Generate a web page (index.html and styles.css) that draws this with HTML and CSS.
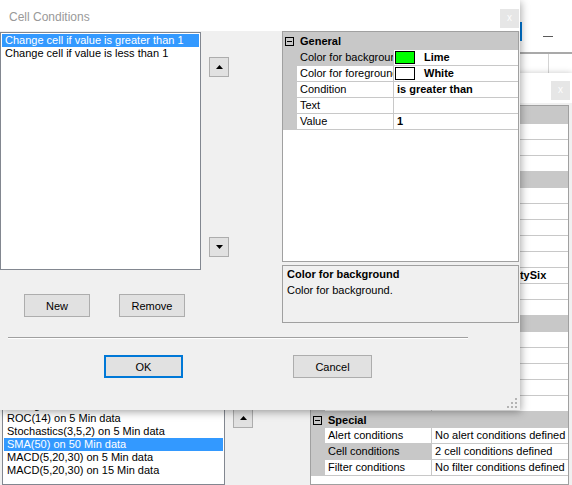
FILE: index.html
```html
<!DOCTYPE html>
<html>
<head>
<meta charset="utf-8">
<title>Cell Conditions</title>
<link rel="stylesheet" href="styles.css">
</head>
<body>
<div class="desktop">

  <div class="win main-win">
    <div class="main-top">
      <div class="main-btn"></div>
      <div class="main-min"></div>
    </div>
    <div class="main-table"><div class="main-col"></div></div>
  </div>

  <div class="win mid-win">
    <div class="mid-title">
      <div class="close-btn">x</div>
    </div>
    <div class="mid-body">
      <div class="mid-list">
        <div class="item">Bollinger on 5 Min data</div>
        <div class="item">ROC(14) on 5 Min data</div>
        <div class="item">Stochastics(3,5,2) on 5 Min data</div>
        <div class="item sel">SMA(50) on 50 Min data</div>
        <div class="item">MACD(5,20,30) on 5 Min data</div>
        <div class="item">MACD(5,20,30) on 15 Min data</div>
      </div>
      <div class="mid-arrows">
        <div class="arrow-btn">
          <svg width="7" height="4" viewBox="0 0 7 4"><polygon points="3.5,0 7,4 0,4" fill="#000"/></svg>
        </div>
      </div>
      <div class="pgrid mid-grid">
        <div class="cat first"><span class="minus"><i></i></span></div>
        <div class="prop"><div class="margin"></div><div class="label"></div><div class="value"></div></div>
        <div class="prop"><div class="margin"></div><div class="label"></div><div class="value"></div></div>
        <div class="prop"><div class="margin"></div><div class="label"></div><div class="value"></div></div>
        <div class="cat"><span class="minus"><i></i></span></div>
        <div class="prop"><div class="margin"></div><div class="label"></div><div class="value"></div></div>
        <div class="prop"><div class="margin"></div><div class="label"></div><div class="value"></div></div>
        <div class="prop"><div class="margin"></div><div class="label"></div><div class="value"></div></div>
        <div class="prop"><div class="margin"></div><div class="label"></div><div class="value"></div></div>
        <div class="prop"><div class="margin"></div><div class="label"></div><div class="value"></div></div>
        <div class="prop"><div class="margin"></div><div class="label"></div><div class="value b">Watchlists TwentySix</div></div>
        <div class="prop"><div class="margin"></div><div class="label"></div><div class="value"></div></div>
        <div class="prop"><div class="margin"></div><div class="label"></div><div class="value"></div></div>
        <div class="cat"><span class="minus"><i></i></span></div>
        <div class="prop"><div class="margin"></div><div class="label"></div><div class="value"></div></div>
        <div class="prop"><div class="margin"></div><div class="label"></div><div class="value"></div></div>
        <div class="prop"><div class="margin"></div><div class="label"></div><div class="value"></div></div>
        <div class="prop"><div class="margin"></div><div class="label"></div><div class="value"></div></div>
        <div class="prop"><div class="margin"></div><div class="label"></div><div class="value"></div></div>
        <div class="cat"><span class="minus"><i></i></span>Special</div>
        <div class="prop"><div class="margin"></div><div class="label">Alert conditions</div><div class="value">No alert conditions defined</div></div>
        <div class="prop"><div class="margin"></div><div class="label sel">Cell conditions</div><div class="value">2 cell conditions defined</div></div>
        <div class="prop"><div class="margin"></div><div class="label">Filter conditions</div><div class="value">No filter conditions defined</div></div>
      </div>
    </div>
  </div>

  <div class="win dialog">
    <div class="dlg-title">
      <span class="dlg-title-text">Cell Conditions</span>
      <div class="close-btn">x</div>
    </div>
    <div class="dlg-main">
      <div class="dlg-left">
        <div class="dlg-lists">
          <div class="cond-list">
            <div class="item sel">Change cell if value is greater than 1</div>
            <div class="item">Change cell if value is less than 1</div>
          </div>
          <div class="arrow-col">
            <div class="arrow-btn">
              <svg width="7" height="4" viewBox="0 0 7 4"><polygon points="3.5,0 7,4 0,4" fill="#000"/></svg>
            </div>
            <div class="arrow-btn">
              <svg width="7" height="4" viewBox="0 0 7 4"><polygon points="0,0 7,0 3.5,4" fill="#000"/></svg>
            </div>
          </div>
        </div>
        <div class="dlg-btns">
          <div class="btn">New</div>
          <div class="btn">Remove</div>
        </div>
      </div>
      <div class="dlg-right">
        <div class="pgrid dlg-grid">
          <div class="cat first"><span class="minus"><i></i></span>General</div>
          <div class="prop"><div class="margin"></div><div class="label sel">Color for background</div><div class="value sw"><span class="swatch lime"></span>Lime</div></div>
          <div class="prop"><div class="margin"></div><div class="label">Color for foreground</div><div class="value sw"><span class="swatch white"></span>White</div></div>
          <div class="prop"><div class="margin"></div><div class="label">Condition</div><div class="value">is greater than</div></div>
          <div class="prop"><div class="margin"></div><div class="label">Text</div><div class="value"></div></div>
          <div class="prop"><div class="margin"></div><div class="label">Value</div><div class="value">1</div></div>
        </div>
        <div class="help">
          <div class="help-title">Color for background</div>
          <div class="help-desc">Color for background.</div>
        </div>
      </div>
    </div>
    <div class="sep"></div>
    <div class="dlg-footer">
      <div class="btn wide default">OK</div>
      <div class="btn wide">Cancel</div>
    </div>
    <svg class="grip" width="10" height="10" viewBox="0 0 10 10">
      <rect x="8" y="0" width="2" height="2" fill="#b4b4b4"/>
      <rect x="8" y="4" width="2" height="2" fill="#b4b4b4"/>
      <rect x="4" y="4" width="2" height="2" fill="#b4b4b4"/>
      <rect x="8" y="8" width="2" height="2" fill="#b4b4b4"/>
      <rect x="4" y="8" width="2" height="2" fill="#b4b4b4"/>
      <rect x="0" y="8" width="2" height="2" fill="#b4b4b4"/>
    </svg>
  </div>

</div>
</body>
</html>
```

FILE: styles.css
```css
* { box-sizing: border-box; }
html, body { margin: 0; padding: 0; }
body {
  font-family: "Liberation Sans", Arial, sans-serif;
  font-size: 11px;
  color: #000;
  background: #fff;
}
.desktop {
  position: relative;
  width: 572px;
  height: 485px;
  overflow: hidden;
  background: #fff;
}
.win { position: absolute; left: 0; }

/* bottom-most main window */
.main-win {
  top: 0;
  width: 572px;
  height: 90px;
  background: #fff;
  display: flex;
  flex-direction: column;
}
.main-top {
  height: 52px;
  display: flex;
  justify-content: flex-end;
  align-items: flex-start;
  flex: none;
}
.main-btn {
  width: 123px;
  height: 19px;
  margin-top: 22px;
  border: 2px solid #0078d7;
}
.main-min {
  width: 10px;
  height: 1px;
  background: #5a5a5a;
  margin: 36px 19px 0 21px;
}
.main-table {
  flex: 1;
  border-top: 2px solid #a9a9a9;
  display: flex;
}
.main-col {
  margin-left: 548px;
  width: 1px;
  background: #d4d4d4;
}

/* middle window */
.mid-win {
  top: 73px;
  width: 572px;
  height: 412px;
  background: #f0f0f0;
  box-shadow: 0 0 6px rgba(0, 0, 0, 0.22);
  display: flex;
  flex-direction: column;
}
.mid-title {
  height: 30px;
  flex: none;
  background: #fff;
  display: flex;
  justify-content: flex-end;
  align-items: flex-start;
}
.mid-title .close-btn { margin: 8px 2px 0 0; }
.mid-body {
  flex: 1;
  display: flex;
  padding-top: 2px;
  min-height: 0;
}
.mid-list {
  margin-left: 2px;
  width: 223px;
  border: 1px solid #828790;
  background: #fff;
  padding: 293px 1px 0;
  overflow: hidden;
}
.mid-arrows {
  width: 85px;
  padding: 303px 0 0 8px;
}
.mid-grid { width: 259px; }

.close-btn {
  width: 19px;
  height: 19px;
  background: #e6e6e6;
  color: #fdfdfd;
  font-size: 10px;
  line-height: 18px;
  text-align: center;
}

/* list items */
.item {
  height: 13px;
  line-height: 13px;
  padding-left: 3px;
  white-space: nowrap;
  overflow: hidden;
}
.item.sel { background: #3399ff; color: #fff; }

/* property grid */
.pgrid {
  border: 1px solid #a0a0a0;
  background: #fff;
  overflow: hidden;
}
.cat {
  height: 16px;
  background: #c8c8c8;
  display: flex;
  align-items: center;
  padding-left: 2px;
  font-weight: bold;
  white-space: nowrap;
}
.cat.first { height: 18px; }
.minus {
  width: 9px;
  height: 9px;
  border: 1px solid #000;
  margin-right: 6px;
  display: flex;
  align-items: center;
  justify-content: center;
  flex: none;
}
.minus i {
  display: block;
  width: 5px;
  height: 1px;
  background: #000;
}
.prop { height: 16px; display: flex; }
.margin { width: 14px; background: #c8c8c8; flex: none; }
.label {
  width: 97px;
  flex: none;
  border-right: 1px solid #c8c8c8;
  border-bottom: 1px solid #c8c8c8;
  padding-left: 3px;
  line-height: 15px;
  white-space: nowrap;
  overflow: hidden;
}
.label.sel { background: #c8c8c8; }
.value {
  flex: 1;
  border-bottom: 1px solid #c8c8c8;
  line-height: 15px;
  padding-left: 3px;
  white-space: nowrap;
  overflow: hidden;
  font-weight: bold;
}
.value.sw {
  display: flex;
  align-items: flex-start;
  padding-left: 0;
}
.swatch {
  width: 20px;
  height: 13px;
  border: 1px solid #000;
  margin: 1px 9px 0 1px;
  flex: none;
}
.swatch.lime { background: #00ff00; }
.swatch.white { background: #fff; }
.mid-grid .label { width: 107px; }
.mid-grid .value { font-weight: normal; }
.mid-grid .value.b { font-weight: bold; }

/* arrow buttons */
.arrow-btn {
  width: 20px;
  height: 20px;
  background: #e1e1e1;
  border: 1px solid #adadad;
  display: flex;
  align-items: center;
  justify-content: center;
}
.arrow-btn svg { display: block; }

/* dialog */
.dialog {
  top: 0;
  width: 520px;
  height: 410px;
  background: #f0f0f0;
  box-shadow: 1px 2px 8px rgba(0, 0, 0, 0.35);
  display: flex;
  flex-direction: column;
}
.dlg-title {
  height: 31px;
  flex: none;
  background: #fff;
  display: flex;
  justify-content: space-between;
  align-items: flex-start;
  padding-left: 9px;
}
.dlg-title-text {
  font-size: 12px;
  color: #999;
  margin-top: 10px;
  line-height: 14px;
}
.dlg-title .close-btn { margin: 9px 1px 0 0; }
.dlg-main {
  display: flex;
  height: 292px;
  flex: none;
}
.dlg-left {
  width: 282px;
  display: flex;
  flex-direction: column;
}
.dlg-lists {
  display: flex;
  margin-top: 1px;
  height: 238px;
}
.cond-list {
  width: 201px;
  border: 1px solid #828790;
  background: #fff;
  padding: 1px 1px 0;
}
.arrow-col {
  width: 81px;
  display: flex;
  flex-direction: column;
  justify-content: space-between;
  padding: 25px 0 13px 8px;
}
.dlg-btns {
  display: flex;
  margin-top: 24px;
  padding-left: 24px;
  gap: 29px;
}
.btn {
  width: 66px;
  height: 23px;
  background: #e1e1e1;
  border: 1px solid #adadad;
  display: flex;
  align-items: center;
  justify-content: center;
  color: #000;
}
.btn.wide { width: 79px; }
.btn.default { border: 2px solid #0078d7; }
.dlg-right {
  width: 237px;
  display: flex;
  flex-direction: column;
}
.dlg-grid { height: 231px; flex: none; }
.help {
  margin-top: 3px;
  height: 58px;
  border: 1px solid #a0a0a0;
  padding: 2px 4px;
}
.help-title { font-weight: bold; line-height: 13px; }
.help-desc { margin-top: 3px; line-height: 13px; }
.sep {
  margin: 14px 0 0 8px;
  width: 460px;
  height: 2px;
  border-top: 1px solid #a0a0a0;
  border-bottom: 1px solid #fff;
  flex: none;
}
.dlg-footer {
  display: flex;
  margin-top: 16px;
  padding-left: 104px;
  gap: 110px;
}
.grip {
  position: absolute;
  right: 3px;
  bottom: 2px;
}
```
